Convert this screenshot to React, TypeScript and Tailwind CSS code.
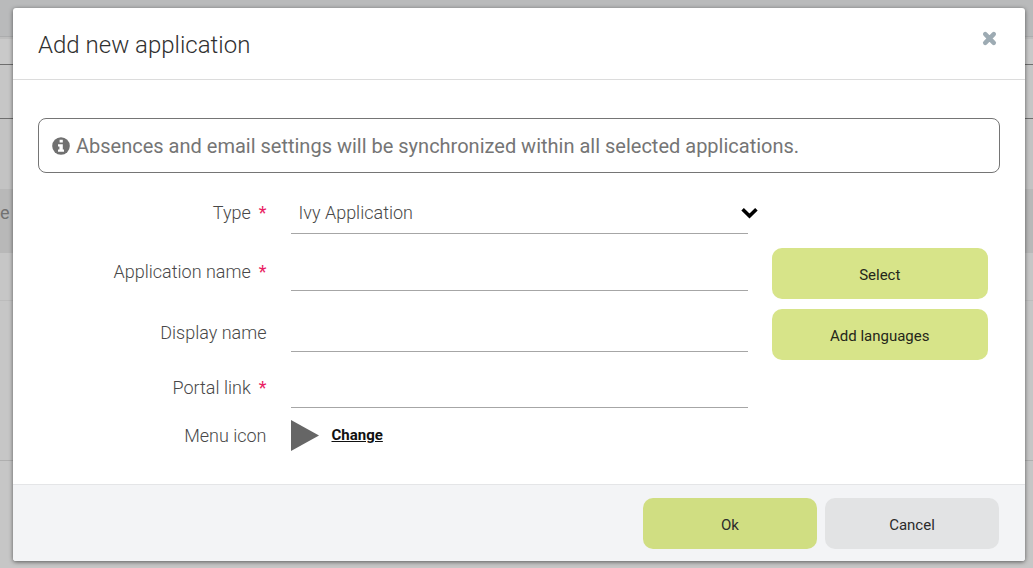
import type { ReactNode } from "react";

function Backdrop() {
  return (
    <div aria-hidden="true" className="col-start-1 row-start-1 flex flex-col bg-[#c6c6c6] text-lg text-[#727272]">
      <div className="h-9 bg-[#b9babb]" />
      <div className="h-[3px] border-t border-[#acadae] bg-[#bebebe]" />
      <div className="h-[26px] border-b border-[#6e6e6e] bg-[#c9c9c9]" />
      <div className="h-[54px] border-b border-[#6e6e6e]" />
      <div className="h-[70px] bg-[#c3c3c3]" />
      <div className="flex h-16 items-center bg-[#b8b8b8] pb-4">e</div>
      <div className="h-12 border-b border-[#bcbcbc] bg-[#c6c6c6]" />
      <div className="h-40 border-b border-[#afafaf]" />
      <div className="grow" />
    </div>
  );
}

type RowProps = {
  label: string;
  htmlFor?: string;
  required?: boolean;
  height: string;
  action?: string;
  children: ReactNode;
};

function Row({ label, htmlFor, required, height, action, children }: RowProps) {
  const text = (
    <>
      {label}
      {required && <span className="ml-2 font-normal text-[#e91e63]">*</span>}
    </>
  );
  const labelClass = `px-3 text-right ${action ? "pb-1" : ""}`;
  return (
    <div className={`grid grid-cols-4 items-center ${height}`}>
      {htmlFor ? (
        <label htmlFor={htmlFor} className={labelClass}>{text}</label>
      ) : (
        <span className={labelClass}>{text}</span>
      )}
      <div className="col-span-2 px-3">{children}</div>
      {action && (
        <div className="px-3">
          <button type="button" className="h-[51px] w-full rounded-[10px] bg-[#d7e489] pt-1 text-[15px] font-normal text-[#25271a]">
            {action}
          </button>
        </div>
      )}
    </div>
  );
}

const field = "block w-full border-b border-[#a6a6a6] bg-transparent px-2 outline-none";

export default function App() {
  return (
    <div className="grid min-h-screen font-['Roboto',sans-serif]">
      <Backdrop />
      <div className="col-start-1 row-start-1 pt-2 pr-2 pb-[7px] pl-[13px]">
        <div
          role="dialog"
          aria-labelledby="dialog-title"
          className="flex h-full flex-col overflow-hidden rounded-[3px] bg-white shadow-[0_1px_4px_rgba(0,0,0,0.55)]"
        >
          <header className="flex h-[72px] items-center justify-between border-b border-[#dcdcdc] pr-7 pl-[25px]">
            <h1 id="dialog-title" className="pt-0.5 text-2xl font-light text-[#303030]">Add new application</h1>
            <button type="button" aria-label="Close" className="mb-[10px]">
              <svg viewBox="0 0 14 14" className="size-[15px]" fill="none" stroke="#9dabb3" strokeWidth="4.2" strokeLinecap="round">
                <path d="M3 3 11 11M11 3 3 11" />
              </svg>
            </button>
          </header>

          <main className="grow px-[25px] pt-[38px] text-lg font-light text-[#484848]">
            <p className="mb-[10px] flex h-[55px] items-center gap-[6px] rounded-lg border border-[#757575] px-[13px] text-xl font-normal text-[#757575]">
              <svg viewBox="0 0 18 18" className="size-[18px] shrink-0">
                <circle cx="9" cy="9" r="8.8" fill="#707070" />
                <path d="M7.6 2.8h3.2v2.7H7.6zM6 7.2h4.8v5.3H12v2.3H6v-2.3h1.4V9.4H6z" fill="#fff" />
              </svg>
              Absences and email settings will be synchronized within all selected applications.
            </p>

            <Row label="Type" htmlFor="type" required height="h-[60px]">
              <div className="relative">
                <select id="type" className={`${field} h-[41px] appearance-none`}>
                  <option>Ivy Application</option>
                </select>
                <svg viewBox="0 0 17 12" className="pointer-events-none absolute top-[14px] -right-[10px] h-3 w-[17px]" fill="none" stroke="#000" strokeWidth="3.6">
                  <path d="M1.6 2.2 8.5 9 15.4 2.2" />
                </svg>
              </div>
            </Row>
            <Row label="Application name" htmlFor="app-name" required height="h-[61px]" action="Select">
              <input id="app-name" type="text" className={`${field} h-[34px]`} />
            </Row>
            <Row label="Display name" htmlFor="display-name" height="h-[61px]" action="Add languages">
              <input id="display-name" type="text" className={`${field} h-[34px]`} />
            </Row>
            <Row label="Portal link" htmlFor="portal-link" required height="h-[46px]">
              <input id="portal-link" type="text" className={`${field} h-10`} />
            </Row>
            <Row label="Menu icon" height="h-[49px]">
              <div className="flex items-center gap-[13px]">
                <svg viewBox="0 0 28 31" className="h-[31px] w-7" fill="#666">
                  <path d="M0 0 28 15.5 0 31z" />
                </svg>
                <a href="#change-icon" className="text-[15px] font-bold text-[#111] underline">Change</a>
              </div>
            </Row>
          </main>

          <footer className="flex justify-end gap-2 border-t border-[#e4e5e7] bg-[#f3f4f6] pt-[13px] pr-[26px] pb-3 text-[15px] text-[#2b2b2b]">
            <button type="button" className="h-[51px] w-[174px] rounded-[10px] bg-[#d0de82] pt-1">Ok</button>
            <button type="button" className="h-[51px] w-[174px] rounded-[10px] bg-[#e2e3e4] pt-1">Cancel</button>
          </footer>
        </div>
      </div>
    </div>
  );
}
